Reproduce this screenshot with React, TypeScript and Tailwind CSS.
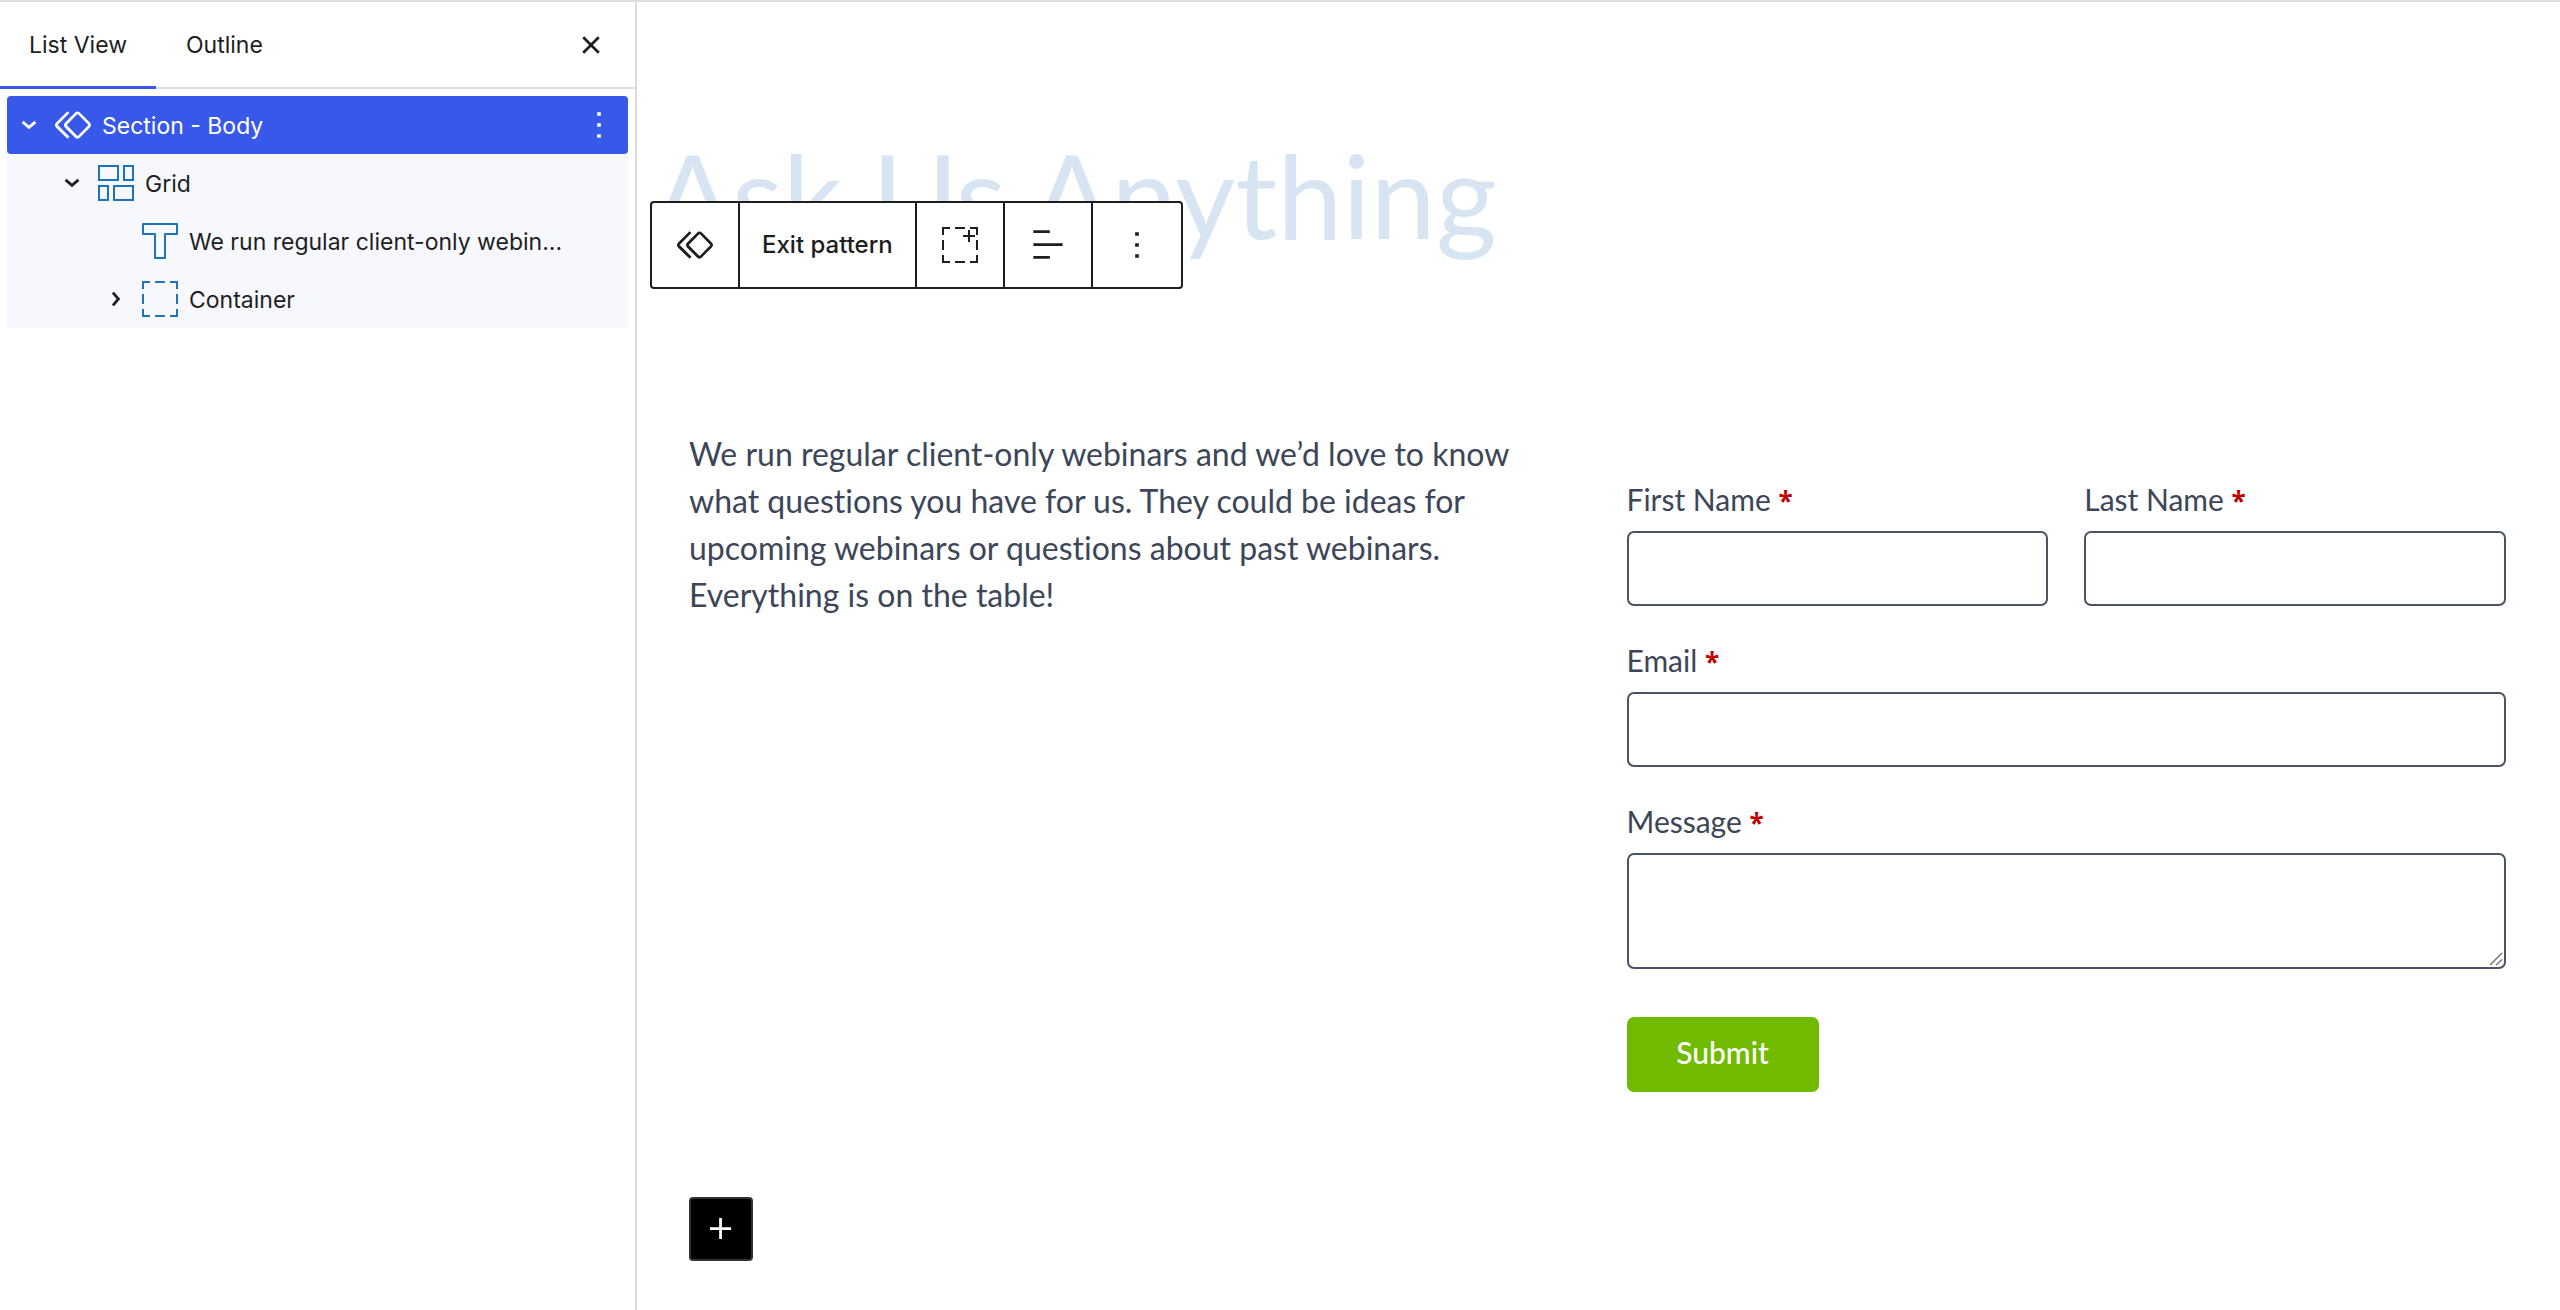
import type { ReactNode } from 'react';

const PATHS = {
  symbol:
    'M21.3 10.8l-5.6-5.6c-.7-.7-1.8-.7-2.5 0l-5.6 5.6c-.7.7-.7 1.8 0 2.5l5.6 5.6c.3.3.8.5 1.2.5s.9-.2 1.2-.5l5.6-5.6c.8-.7.8-1.9.1-2.5zm-1 1.4l-5.6 5.6c-.1.1-.3.1-.4 0l-5.6-5.6c-.1-.1-.1-.3 0-.4l5.6-5.6s.1-.1.2-.1.1 0 .2.1l5.6 5.6c.1.1.1.3 0 .4zm-16.6-.4L10 5.5l-1-1-6.3 6.3c-.7.7-.7 1.8 0 2.5L9 19.5l1.1-1.1-6.3-6.3c-.2 0-.2-.2-.1-.3z',
  chevronDown:
    'm15.99 10.889-3.988 3.418-3.988-3.418.976-1.14 3.012 2.582 3.012-2.582.976 1.14Z',
  chevronRight:
    'M10.889 8.014 14.307 12.002 10.889 15.99 9.749 15.014 12.331 12.002 9.749 8.99Z',
  close:
    'M12 13.06l3.712 3.713 1.061-1.06L13.061 12l3.712-3.712-1.06-1.06L12 10.938 8.288 7.227l-1.061 1.06L10.939 12l-3.712 3.712 1.06 1.061L12 13.061z',
  more: 'M13 19h-2v-2h2v2zm0-6h-2v-2h2v2zm0-6h-2V5h2v2z',
  align: 'M13 5.5H4V4h9v1.5Zm7 7H4V11h16v1.5Zm-7 7H4V18h9v1.5Z',
  plus: 'M11 12.5V17.5H12.5V12.5H17.5V11H12.5V6H11V11H6V12.5H11Z',
};

function Icon({ name }: { name: keyof typeof PATHS }) {
  return (
    <svg viewBox="0 0 24 24" className="size-11 shrink-0 fill-current" aria-hidden="true">
      <path d={PATHS[name]} />
    </svg>
  );
}

function LineIcon({ children, className }: { children: ReactNode; className?: string }) {
  return (
    <svg
      viewBox="0 0 44 44"
      className={`size-11 shrink-0 fill-none stroke-current stroke-2 ${className ?? ''}`}
      aria-hidden="true"
    >
      {children}
    </svg>
  );
}

function GridIcon() {
  return (
    <LineIcon className="text-[#1e73be]">
      <rect x="5" y="5" width="19" height="14" />
      <rect x="30" y="5" width="9" height="14" />
      <rect x="5" y="25" width="9" height="14" />
      <rect x="20" y="25" width="19" height="14" />
    </LineIcon>
  );
}

function TextIcon() {
  return (
    <LineIcon className="text-[#1e73be]">
      <path d="M5 5H39V15H27V39H17V15H5Z" strokeLinejoin="round" />
    </LineIcon>
  );
}

const DASHED =
  'M5 12V5H12M17 5H27M32 5H39V12M39 17V27M39 32V39H32M27 39H17M12 39H5V32M5 27V17';

function ContainerIcon() {
  return (
    <LineIcon className="text-[#1e73be]">
      <path d={DASHED} />
    </LineIcon>
  );
}

function AddContainerIcon() {
  return (
    <LineIcon>
      <path d={DASHED} />
      <path d="M31 7V19M25 13H37" />
    </LineIcon>
  );
}

function TreeRow({
  pad,
  chevron,
  icon,
  label,
}: {
  pad: string;
  chevron?: 'chevronDown' | 'chevronRight';
  icon: ReactNode;
  label: string;
}) {
  return (
    <li className={`flex h-[58px] items-center ${pad}`}>
      {chevron ? (
        <button type="button" aria-label={`Toggle ${label}`}>
          <Icon name={chevron} />
        </button>
      ) : (
        <span className="w-11" />
      )}
      {icon}
      <a href="#block" className="ml-[7px] min-w-0 truncate pt-0.5">
        {label}
      </a>
    </li>
  );
}

function Sidebar() {
  return (
    <aside className="w-[637px] shrink-0 border-r-2 border-[#ddd] font-['Inter',sans-serif] text-[23px] text-[#1e1e1e]">
      <div className="flex h-[87px] items-stretch border-b-2 border-[#ddd]" role="tablist">
        <button
          type="button"
          role="tab"
          aria-selected="true"
          className="-mb-0.5 border-b-3 border-[#3858e9] px-[29px] pt-0.5"
        >
          List View
        </button>
        <button type="button" role="tab" aria-selected="false" className="px-[30px] pt-0.5">
          Outline
        </button>
        <button type="button" aria-label="Close" className="mr-[22px] ml-auto">
          <Icon name="close" />
        </button>
      </div>
      <ul className="mx-[7px] mt-[7px] bg-[#f7f8fe]">
        <li className="flex h-[58px] items-center rounded-sm bg-[#3858e9] text-white">
          <button type="button" aria-label="Toggle Section - Body">
            <Icon name="chevronDown" />
          </button>
          <Icon name="symbol" />
          <a href="#block" className="ml-[7px] pt-0.5">
            Section - Body
          </a>
          <button type="button" aria-label="Options" className="mr-[7px] ml-auto">
            <Icon name="more" />
          </button>
        </li>
        <TreeRow pad="pl-[43px]" chevron="chevronDown" icon={<GridIcon />} label="Grid" />
        <TreeRow
          pad="pl-[87px] pr-[58px]"
          icon={<TextIcon />}
          label="We run regular client-only webin..."
        />
        <TreeRow
          pad="pl-[87px]"
          chevron="chevronRight"
          icon={<ContainerIcon />}
          label="Container"
        />
      </ul>
    </aside>
  );
}

function Toolbar() {
  const cell = 'flex w-[88px] items-center justify-center';
  return (
    <div
      role="toolbar"
      aria-label="Block tools"
      className="absolute top-[199px] left-[13px] flex h-[88px] divide-x-2 divide-[#1e1e1e] rounded-sm border-2 border-[#1e1e1e] bg-white font-['Inter',sans-serif] text-[24px] font-medium text-[#1e1e1e]"
    >
      <button type="button" aria-label="Pattern" className={cell}>
        <Icon name="symbol" />
      </button>
      <button type="button" className="px-[22px]">
        Exit pattern
      </button>
      <button type="button" aria-label="Add container" className={cell}>
        <AddContainerIcon />
      </button>
      <button type="button" aria-label="Align" className={cell}>
        <Icon name="align" />
      </button>
      <button type="button" aria-label="Options" className={cell}>
        <Icon name="more" />
      </button>
    </div>
  );
}

const FIELD =
  'block w-full rounded-[7px] border-2 border-[#4a5465] bg-white px-4 text-[30px]';

function Field({ id, label, children }: { id: string; label: string; children: ReactNode }) {
  return (
    <div>
      <label htmlFor={id} className="mb-2 block text-[30px] leading-[47px]">
        {label}{' '}
        <span className="font-['Open_Sans',sans-serif] text-[26px] leading-none font-bold text-[#c00000]">
          *
        </span>
      </label>
      {children}
    </div>
  );
}

function ContactForm() {
  return (
    <form className="flex flex-col gap-[31px] pt-[46px]">
      <div className="grid grid-cols-2 gap-9">
        <Field id="first" label="First Name">
          <input id="first" type="text" className={`h-[75px] ${FIELD}`} />
        </Field>
        <Field id="last" label="Last Name">
          <input id="last" type="text" className={`h-[75px] ${FIELD}`} />
        </Field>
      </div>
      <Field id="email" label="Email">
        <input id="email" type="email" className={`h-[75px] ${FIELD}`} />
      </Field>
      <Field id="message" label="Message">
        <div className="relative">
          <textarea id="message" className={`h-[116px] resize-none ${FIELD}`} />
          <svg
            viewBox="0 0 14 14"
            className="pointer-events-none absolute right-[3px] bottom-[3px] size-3.5 stroke-[#777] stroke-[1.5]"
            aria-hidden="true"
          >
            <path d="M1 13L13 1M7 13L13 7.5" />
          </svg>
        </div>
      </Field>
      <button
        type="button"
        className="mt-[17px] h-[75px] w-48 rounded-[7px] bg-[#70bb00] pb-1 text-[30px] font-medium text-white"
      >
        Submit
      </button>
    </form>
  );
}

export default function App() {
  return (
    <div className="flex min-h-screen border-t-2 border-[#ddd] bg-white">
      <Sidebar />
      <main className="relative min-w-0 flex-1 font-['Lato',sans-serif] text-[#3c4658] [font-variant-ligatures:none]">
        <h1 className="pt-[124px] pl-4 text-[117px] leading-[136px] text-[#d7e5f3]">
          Ask Us Anything
        </h1>
        <Toolbar />
        <div className="mt-[168px] mr-[54px] ml-[52px] grid grid-cols-2 gap-[58px]">
          <p className="text-[32px] leading-[47px]">
            We run regular client-only webinars and we’d love to know what questions you have for
            us. They could be ideas for upcoming webinars or questions about past webinars.
            Everything is on the table!
          </p>
          <ContactForm />
        </div>
        <button
          type="button"
          aria-label="Add block"
          className="mt-[105px] ml-[52px] flex size-16 items-center justify-center rounded-sm border-2 border-[#333] bg-black text-white"
        >
          <Icon name="plus" />
        </button>
      </main>
    </div>
  );
}
